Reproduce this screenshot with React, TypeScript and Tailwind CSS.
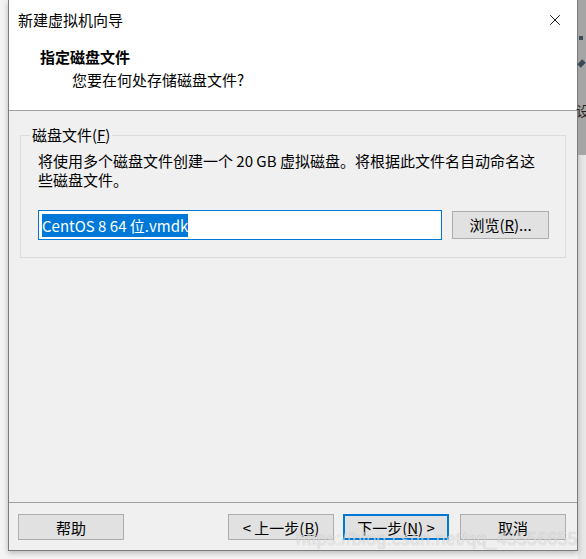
import { X } from 'lucide-react'

const font = { fontFamily: "'Noto Sans CJK SC', 'Noto Sans', sans-serif" }

function Btn({ children, primary }: { children: React.ReactNode; primary?: boolean }) {
  return (
    <button
      className={
        'flex h-[26px] w-[106px] items-center justify-center bg-[#e1e1e1] text-[15px] leading-none text-black ' +
        (primary ? 'border-2 border-[#0078d7]' : 'border border-[#adadad]')
      }
    >
      {children}
    </button>
  )
}

export default function App() {
  return (
    <div className="flex h-[559px] w-[586px] overflow-hidden bg-[#f4f4f4]" style={font}>
      <div className="w-[8px] shrink-0" />

      <div className="relative flex h-[551px] w-[570px] shrink-0 flex-col border-x border-b border-[#7c7c7c] bg-[#f0f0f0] shadow-[0_2px_6px_rgba(0,0,0,0.25)]">
        {/* header */}
        <div className="h-[111px] shrink-0 border-b border-[#a0a0a0] bg-white">
          <div className="flex h-[40px] items-center justify-between pl-[9px] pr-[13px]">
            <span className="text-[15px] text-black">新建虚拟机向导</span>
            <X size={18} strokeWidth={1.2} className="text-black" />
          </div>
          <div className="mt-[7px] pl-[31px] text-[15px] font-bold leading-[20px] text-black">指定磁盘文件</div>
          <div className="mt-[3px] pl-[63px] text-[15px] leading-[20px] text-black">您要在何处存储磁盘文件?</div>
        </div>

        {/* body */}
        <div className="flex-1 px-[11px] pr-[12px] pt-[14px]">
          <fieldset className="border border-[#dcdcdc] pb-[17px] pl-[17px] pr-[16px]">
            <legend className="-ml-[8px] px-[2px] text-[15px] leading-[20px] text-black">
              磁盘文件(<span className="underline">F</span>)
            </legend>
            <p className="mt-[6px] text-[15px] leading-[19px] text-black">
              将使用多个磁盘文件创建一个 20 GB 虚拟磁盘。将根据此文件名自动命名这些磁盘文件。
            </p>
            <div className="mt-[21px] flex items-center gap-[10px]">
              <div className="flex h-[30px] w-[404px] items-center border border-[#0078d7] bg-white px-[3px]">
                <span className="bg-[#0078d7] text-[15px] leading-[23px] text-white">CentOS 8 64 位.vmdk</span>
              </div>
              <button className="flex h-[28px] w-[97px] items-center justify-center border border-[#adadad] bg-[#e1e1e1] text-[15px] text-black">
                浏览(<span className="underline">R</span>)...
              </button>
            </div>
          </fieldset>
        </div>

        {/* footer */}
        <div className="h-[48px] shrink-0 border-t border-[#a0a0a0] pt-[11px]">
          <div className="flex items-center pl-[9px] pr-[11px]">
            <Btn>帮助</Btn>
            <div className="ml-auto flex gap-[9px]">
              <Btn>&lt; 上一步(<span className="underline">B</span>)</Btn>
              <Btn primary>
                下一步(<span className="underline">N</span>) &gt;
              </Btn>
            </div>
            <div className="ml-[11px]">
              <Btn>取消</Btn>
            </div>
          </div>
        </div>

        <span
          className="pointer-events-none absolute bottom-[-2px] right-[-1px] text-[17.5px] tracking-[0.4px] text-white/60 [text-shadow:0_0_1px_rgba(0,0,0,0.25)]"
          style={{ fontFamily: "'Liberation Sans', Arial, sans-serif" }}
        >
          https://blog.csdn.net/qq_45556655
        </span>
      </div>

      <div className="flex w-[8px] shrink-0 flex-col">
        <div className="relative h-[155px] bg-[#a5a5a5]">
          <span className="absolute left-[1px] top-[36px] h-[4px] w-[4px] bg-[#3c4a5a]" />
          <span className="absolute left-[1px] top-[60px] h-[7px] w-[5px] rotate-45 bg-[#3c4a5a]" />
          <span className="absolute -left-[2px] top-[100px] text-[14px] text-[#222]">设</span>
        </div>
        <div className="flex-1 bg-[#e8e8e8]" />
      </div>
    </div>
  )
}
